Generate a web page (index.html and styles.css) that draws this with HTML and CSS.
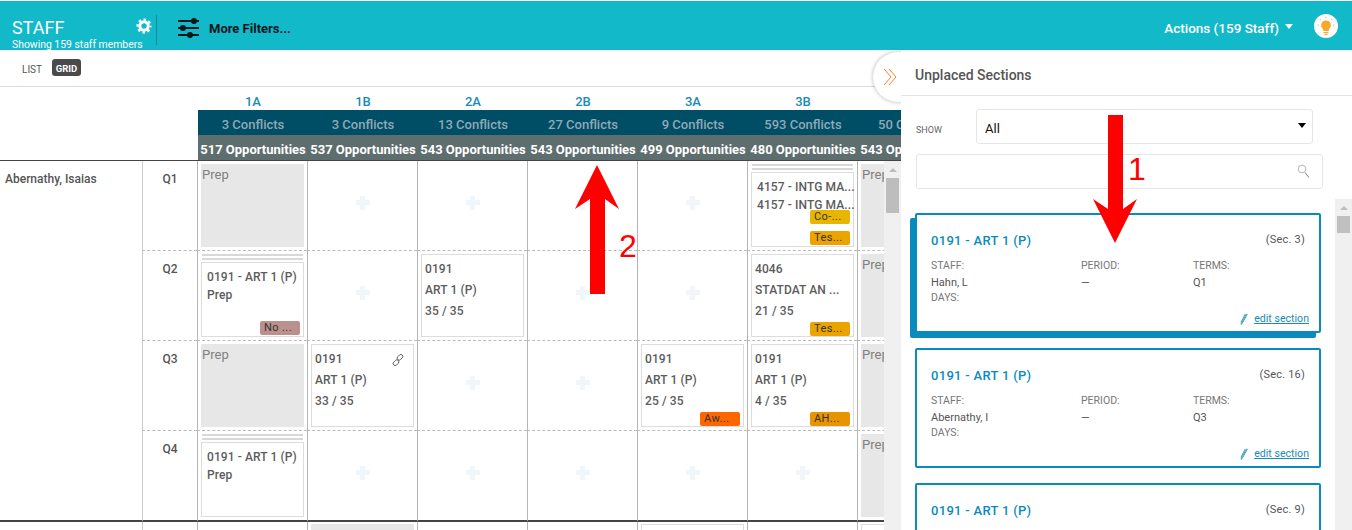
FILE: index.html
```html
<!DOCTYPE html>
<html lang="en">
<head>
<meta charset="utf-8">
<title>Staff</title>
<link rel="stylesheet" href="styles.css">
</head>
<body>
<div class="app">
  <header class="topbar">
    <div class="brand">
      <div class="brand-title">STAFF</div>
      <div class="brand-sub">Showing 159 staff members</div>
    </div>
    <svg class="gear" width="16" height="16" viewBox="0 0 16 16"><circle cx="8" cy="8" r="4.2" fill="none" stroke="#fff" stroke-width="3"/><circle cx="8" cy="8" r="6.4" fill="none" stroke="#fff" stroke-width="2.4" stroke-dasharray="2.6 2.43" stroke-dashoffset="1.3"/></svg>
    <span class="divider"></span>
    <svg class="sliders" width="22" height="22" viewBox="0 0 22 22"><g stroke="#06171c" stroke-width="2"><path d="M0 4h21M0 11h21M0 18h21"/></g><g fill="#06171c"><circle cx="16" cy="4" r="3"/><circle cx="5" cy="11" r="3"/><circle cx="12" cy="18" r="3"/></g></svg>
    <span class="filters">More Filters...</span>
    <span class="actions">Actions (159 Staff)</span>
    <span class="caret"></span>
    <span class="bulb">
      <svg width="24" height="24" viewBox="0 0 24 24"><path d="M12 6.500a4.800 4.800 0 0 0-2.800 8.700v1.800h5.600v-1.800A4.800 4.800 0 0 0 12 6.500z" fill="#f6a72c"/><path d="M9.500 18h5v1.200h-5zM10.500 20h3v1h-3z" fill="#f6a72c"/><g fill="#f9c77a"><rect x="11.300" y="2.500" width="1.400" height="1.400"/><rect x="5.500" y="5" width="1.400" height="1.400"/><rect x="17" y="5" width="1.400" height="1.400"/><rect x="3.500" y="10.500" width="1.400" height="1.400"/><rect x="19" y="10.500" width="1.400" height="1.400"/></g></svg>
    </span>
  </header>

  <main class="main">
    <section class="schedule">
      <div class="tabs">
        <span class="tab">LIST</span>
        <span class="tab tab-active">GRID</span>
      </div>
      <div class="head">
        <div class="head-row head-labels"><span>1A</span><span>1B</span><span>2A</span><span>2B</span><span>3A</span><span>3B</span><span>4A</span></div>
        <div class="head-row head-conflicts"><span>3 Conflicts</span><span>3 Conflicts</span><span>13 Conflicts</span><span>27 Conflicts</span><span>9 Conflicts</span><span>593 Conflicts</span><span>50 Conflicts</span></div>
        <div class="head-row head-opps"><span>517 Opportunities</span><span>537 Opportunities</span><span>543 Opportunities</span><span>543 Opportunities</span><span>499 Opportunities</span><span>480 Opportunities</span><span>543 Opportunities</span></div>
      </div>
      <div class="body">
        <div class="viewport">
          <div class="grid">
            <div class="name">Abernathy, Isaias</div>

            <div class="q">Q1</div>
            <div class="cell"><div class="prep">Prep</div></div>
            <div class="cell empty"><i class="plus"></i></div>
            <div class="cell empty"><i class="plus"></i></div>
            <div class="cell empty"><i class="plus"></i></div>
            <div class="cell empty"><i class="plus"></i></div>
            <div class="cell stacked">
              <div class="stripes"></div>
              <div class="card card-stack"><div>4157 - INTG MA...</div><div>4157 - INTG MA...</div><span class="tag tag-co">Co-...</span><span class="tag tag-tes tag-next">Tes...</span></div>
            </div>
            <div class="cell last"><div class="prep">Prep</div></div>

            <div class="q">Q2</div>
            <div class="cell stacked">
              <div class="stripes"></div>
              <div class="card card-stack"><div>0191 - ART 1 (P)</div><div>Prep</div><span class="tag tag-no tag-end">No ...</span></div>
            </div>
            <div class="cell empty"><i class="plus"></i></div>
            <div class="cell"><div class="card"><div>0191</div><div>ART 1 (P)</div><div>35 / 35</div></div></div>
            <div class="cell empty"><i class="plus"></i></div>
            <div class="cell empty"><i class="plus"></i></div>
            <div class="cell"><div class="card"><div>4046</div><div>STATDAT AN ...</div><div>21 / 35</div><span class="tag tag-tes tag-end">Tes...</span></div></div>
            <div class="cell last"><div class="prep">Prep</div></div>

            <div class="q">Q3</div>
            <div class="cell"><div class="prep">Prep</div></div>
            <div class="cell"><div class="card">
              <div class="card-line">0191<svg class="link" width="12" height="12" viewBox="0 0 12 12"><g fill="none" stroke="#555" stroke-width=".9"><rect x="4.800" y="1.300" width="6.400" height="4" rx="2" transform="rotate(-45 8 3.300)"/><rect x="0.800" y="6.700" width="6.400" height="4" rx="2" transform="rotate(-45 4 8.700)"/></g></svg></div>
              <div>ART 1 (P)</div><div>33 / 35</div></div></div>
            <div class="cell empty"><i class="plus"></i></div>
            <div class="cell empty"><i class="plus"></i></div>
            <div class="cell"><div class="card"><div>0191</div><div>ART 1 (P)</div><div>25 / 35</div><span class="tag tag-aw tag-end">Aw...</span></div></div>
            <div class="cell"><div class="card"><div>0191</div><div>ART 1 (P)</div><div>4 / 35</div><span class="tag tag-ah tag-end">AH...</span></div></div>
            <div class="cell last"><div class="prep">Prep</div></div>

            <div class="q q-end">Q4</div>
            <div class="cell cell-end stacked">
              <div class="stripes"></div>
              <div class="card card-stack"><div>0191 - ART 1 (P)</div><div>Prep</div></div>
            </div>
            <div class="cell cell-end empty"><i class="plus"></i></div>
            <div class="cell cell-end empty"><i class="plus"></i></div>
            <div class="cell cell-end empty"><i class="plus"></i></div>
            <div class="cell cell-end empty"><i class="plus"></i></div>
            <div class="cell cell-end empty"><i class="plus"></i></div>
            <div class="cell cell-end last"><div class="prep">Prep</div></div>

            <div class="name-next"></div>
            <div class="q"></div>
            <div class="cell cell-next"></div>
            <div class="cell cell-next"><div class="prep prep-strong">Special</div></div>
            <div class="cell cell-next"></div>
            <div class="cell cell-next"></div>
            <div class="cell cell-next"><div class="card"></div></div>
            <div class="cell cell-next"></div>
            <div class="cell cell-next last"><div class="card"></div></div>
          </div>
        </div>
        <div class="scrollbar scrollbar-grid"><i class="scroll-up"></i><i class="scroll-thumb"></i></div>
      </div>
    </section>

    <button class="toggle" type="button" aria-label="Collapse">
      <svg width="14" height="18" viewBox="0 0 14 18"><path d="M1 1l7 8-7 8M6 1l7 8-7 8" fill="none" stroke="#f58233" stroke-width="1"/></svg>
    </button>

    <aside class="panel">
      <h2 class="panel-title">Unplaced Sections</h2>
      <div class="show-row">
        <span class="show-label">SHOW</span>
        <div class="select">All<i class="select-caret"></i></div>
      </div>
      <div class="search">
        <svg width="13" height="15" viewBox="0 0 13 15"><circle cx="5" cy="5" r="3.800" fill="none" stroke="#b5b5b5" stroke-width="1"/><path d="M8 8.500l4 5" stroke="#999" stroke-width="1.200"/></svg>
      </div>
      <div class="list-wrap">
        <div class="list">
          <article class="section section-active">
            <div class="section-head"><span class="section-name">0191 - ART 1 (P)</span><span class="section-no">(Sec. 3)</span></div>
            <div class="fields">
              <div><div class="label">STAFF:</div><div class="value">Hahn, L</div><div class="label">DAYS:</div></div>
              <div><div class="label">PERIOD:</div><div class="value">—</div></div>
              <div><div class="label">TERMS:</div><div class="value">Q1</div></div>
            </div>
            <div class="section-foot"><svg class="pencil" width="8" height="12" viewBox="0 0 8 12"><path d="M6.500.8L1.300 10.400l-.300 1 .900-.500L7.200 1.500zM5.200 1L.9 9.500" fill="none" stroke="#1a8cb8" stroke-width=".8"/></svg><a class="edit" href="#">edit section</a></div>
          </article>
          <article class="section">
            <div class="section-head"><span class="section-name">0191 - ART 1 (P)</span><span class="section-no">(Sec. 16)</span></div>
            <div class="fields">
              <div><div class="label">STAFF:</div><div class="value">Abernathy, I</div><div class="label">DAYS:</div></div>
              <div><div class="label">PERIOD:</div><div class="value">—</div></div>
              <div><div class="label">TERMS:</div><div class="value">Q3</div></div>
            </div>
            <div class="section-foot"><svg class="pencil" width="8" height="12" viewBox="0 0 8 12"><path d="M6.500.8L1.300 10.400l-.300 1 .900-.500L7.200 1.500zM5.200 1L.9 9.500" fill="none" stroke="#1a8cb8" stroke-width=".8"/></svg><a class="edit" href="#">edit section</a></div>
          </article>
          <article class="section">
            <div class="section-head"><span class="section-name">0191 - ART 1 (P)</span><span class="section-no">(Sec. 9)</span></div>
          </article>
        </div>
        <div class="scrollbar scrollbar-list"><i class="scroll-up"></i><i class="scroll-thumb"></i></div>
      </div>
    </aside>
  </main>

  <svg class="annotations" width="1352" height="530" viewBox="0 0 1352 530" aria-hidden="true">
    <path d="M597 165L619 209 605 199V294H590V199L575 209z" fill="#f00"/>
    <path d="M1108 115H1123V209L1137 199 1115 243 1093 199 1108 209z" fill="#f00"/>
  </svg>
  <span class="note note-1">1</span>
  <span class="note note-2">2</span>
</div>
</body>
</html>
```

FILE: styles.css
```css
* { box-sizing: border-box; }
html, body { margin: 0; padding: 0; }
body { font-family: Roboto, "Liberation Sans", sans-serif; color: #555; background: #fff; }
.app { position: relative; width: 1352px; height: 530px; overflow: hidden; display: flex; flex-direction: column; }

/* top bar */
.topbar { height: 50px; border-top: 1px solid #fff; background: #12b9c9; display: flex; align-items: center; padding-left: 12px; flex: none; color: #fff; }
.brand { width: 124px; align-self: flex-start; }
.brand-title { font-size: 18px; line-height: 20px; margin-top: 17px; }
.brand-sub { font-size: 10.400px; line-height: 13px; white-space: nowrap; }
.gear { flex: none; }
.divider { width: 1px; height: 30px; background: #0b8b98; margin-left: 4px; margin-top: 9px; }
.sliders { margin-left: 21px; flex: none; margin-top: 5px; }
.filters { margin-left: 9px; font-size: 13px; font-weight: 700; color: #06171c; margin-top: 5px; }
.actions { margin-left: auto; font-size: 13.500px; font-weight: 500; margin-top: 5px; }
.caret { width: 0; height: 0; border-left: 4.500px solid transparent; border-right: 4.500px solid transparent; border-top: 5px solid #fff; margin-left: 6px; margin-top: 2px; }
.bulb { width: 24px; height: 24px; border-radius: 50%; background: #fff; margin-left: 21px; margin-right: 14px; margin-top: 1px; display: block; }
.bulb svg { display: block; }

.main { flex: 1; display: flex; position: relative; min-height: 0; }

/* schedule */
.schedule { width: 901px; flex: none; display: flex; flex-direction: column; overflow: hidden; }
.tabs { height: 37px; border-bottom: 1px solid #ddd; display: flex; align-items: flex-start; padding-left: 22px; flex: none; }
.tab { font-size: 10px; line-height: 17px; margin-top: 11px; color: #555; }
.tab-active { margin: 9px 0 0 10px; width: 29px; height: 17px; text-align: center; background: #4a4a4a; color: #fff; border-radius: 3px; font-weight: 700; font-size: 9.500px; line-height: 20px; }

.head { height: 74px; border-bottom: 1px solid #444; padding-left: 198px; flex: none; }
.head-row { display: flex; width: 770px; }
.head-row span { width: 110px; flex: none; text-align: center; white-space: nowrap; }
.head-labels { height: 23px; font-size: 13px; font-weight: 500; color: #1a8cb8; line-height: 29px; }
.head-conflicts { height: 25px; background: #004d66; color: #8fa9b5; font-size: 13px; font-weight: 500; line-height: 29px; }
.head-opps { height: 25px; background: #5e6e6e; color: #fff; font-size: 13px; font-weight: 700; line-height: 29px; }

.body { flex: 1; display: flex; min-height: 0; }
.viewport { width: 884px; flex: none; overflow: hidden; }
.grid { display: grid; grid-template-columns: 142px 55px repeat(7, 110px); grid-template-rows: 90px 90px 90px 91px 90px; width: 967px; }
.name { grid-row: 1 / span 4; font-size: 12px; font-weight: 500; padding: 11px 0 0 5px; border-bottom: 2px solid #444; }
.q { border-left: 1px solid #ccc; border-bottom: 1px dashed #bbb; text-align: center; font-size: 12px; font-weight: 500; padding-top: 11px; line-height: 14px; }
.q-end { border-bottom: 2px solid #444; }
.cell { border-left: 1px solid #b5b5b5; border-bottom: 1px dashed #bbb; padding: 3px; display: flex; flex-direction: column; overflow: hidden; min-width: 0; }
.cell-end { border-bottom: 2px solid #444; }
.cell-next { padding-top: 2px; border-bottom: 0; }
.empty { align-items: center; justify-content: center; padding-bottom: 9px; }
.plus { display: block; width: 14px; height: 14px; background: linear-gradient(#f1f6fa, #f1f6fa) center / 14px 5px no-repeat, linear-gradient(#f1f6fa, #f1f6fa) center / 5px 14px no-repeat; }

.prep { flex: 1; background: #e7e7e7; color: #808080; font-size: 13px; line-height: 15px; padding: 3px 0 0 1px; white-space: nowrap; }
.prep-strong { color: #666; font-weight: 500; padding-top: 4px; }
.stripes { height: 6px; margin: 0 1px 2px; border-top: 2px solid #d8d8d8; border-bottom: 2px solid #d8d8d8; flex: none; }
.card { flex: 1; min-height: 0; border: 1px solid #ddd; padding: 4px 3px 1px; font-size: 12px; font-weight: 500; line-height: 21px; color: #5c5c5c; display: flex; flex-direction: column; white-space: nowrap; letter-spacing: .1px; }
.card-stack { line-height: 18px; padding: 5px 3px 1px 5px; }
.card-line { display: flex; justify-content: space-between; align-items: center; }
.link { margin-right: 6px; }
.tag { align-self: flex-end; width: 40px; height: 14px; border-radius: 2px; font-size: 11px; line-height: 14px; font-weight: 400; color: #333; padding-left: 4px; letter-spacing: .4px; flex: none; }
.tag-end { margin-top: auto; }
.tag-next { margin-top: 7px; }
.tag-co { background: #e8b600; margin-top: -4px; }
.tag-tes { background: #eba300; }
.tag-no { background: #bc918d; }
.tag-aw { background: #ff6600; }
.tag-ah { background: #e89400; }

.scrollbar { width: 17px; background: #f0f0f0; flex: none; padding: 0 2px; }
.scrollbar i { display: block; }
.scroll-up { width: 0; height: 0; margin: 7px auto 0; border-left: 4px solid transparent; border-right: 4px solid transparent; border-bottom: 4px solid #bdbdbd; }
.scrollbar-grid .scroll-thumb { width: 13px; height: 35px; margin-top: 6px; background: #bdbdbd; }
.scrollbar-list { align-self: stretch; }
.scrollbar-list .scroll-thumb { width: 13px; height: 17px; margin-top: 6px; background: #c0c0c0; }

/* collapse toggle */
.toggle { position: absolute; left: 873px; top: 2px; width: 50px; height: 50px; border-radius: 50%; border: 0; padding: 0 0 0 10px; background: #fff; box-shadow: 0 0 4px rgba(0,0,0,.3); display: flex; align-items: center; justify-content: flex-start; z-index: 1; }
.toggle svg { flex: none; }

/* panel */
.panel { position: relative; z-index: 2; flex: 1; background: #fff; display: flex; flex-direction: column; min-width: 0; }
.panel-title { margin: 0; height: 46px; border-bottom: 1px solid #e4e4e4; padding: 17px 0 0 14px; font-size: 14px; line-height: 16px; font-weight: 500; color: #555; flex: none; }
.show-row { display: flex; align-items: center; margin: 13px 0 0 15px; height: 35px; flex: none; }
.show-label { width: 60px; font-size: 9px; color: #666; padding-top: 7px; }
.select { width: 337px; height: 35px; border: 1px solid #e6e6e6; border-radius: 3px; font-size: 13px; line-height: 38px; padding-left: 8px; color: #111; display: flex; justify-content: space-between; }
.select-caret { width: 0; height: 0; margin: 13px 6px 0 0; border-left: 4px solid transparent; border-right: 4px solid transparent; border-top: 5px solid #000; }
.search { margin: 10px 0 0 15px; width: 407px; height: 35px; border: 1px solid #e6e6e6; border-radius: 3px; flex: none; display: flex; justify-content: flex-end; padding: 9px 12px 0 0; }
.search svg { display: block; }
.list-wrap { flex: 1; margin-top: 10px; display: flex; min-height: 0; overflow: hidden; }
.list { width: 434px; padding: 14px 0 0 14px; flex: none; overflow: hidden; display: flex; flex-direction: column; gap: 15px; }
.section { width: 406px; height: 120px; flex: none; border: 2px solid #0a8bbd; border-radius: 2px; padding: 17px 14px 0 14px; background: #fff; }
.section-active { box-shadow: -5px 5px 0 #0a8bbd; }
.section-head { display: flex; justify-content: space-between; align-items: flex-start; }
.section-name { font-size: 13px; font-weight: 500; line-height: 18px; color: #0a8bbd; letter-spacing: .3px; }
.section-no { font-size: 11px; line-height: 16px; color: #555; letter-spacing: .2px; }
.fields { display: grid; grid-template-columns: 150px 112px 1fr; margin-top: 9px; }
.label { font-size: 10.500px; line-height: 14px; color: #777; }
.value { font-size: 11px; line-height: 16px; margin-top: 2px; color: #555; }
.section-foot { display: flex; justify-content: flex-end; align-items: center; margin: 7px -4px 0 0; font-size: 10.600px; }
.pencil { margin-right: 6px; }
.edit { color: #1a8cb8; text-decoration: underline; line-height: 14px; }

/* red annotations */
.annotations { position: absolute; left: 0; top: 0; z-index: 5; pointer-events: none; }
.note { position: absolute; z-index: 5; font-family: "Liberation Sans", sans-serif; font-size: 32px; line-height: 32px; color: #f00; }
.note-1 { left: 1128px; top: 153px; }
.note-2 { left: 619px; top: 230px; }
```
